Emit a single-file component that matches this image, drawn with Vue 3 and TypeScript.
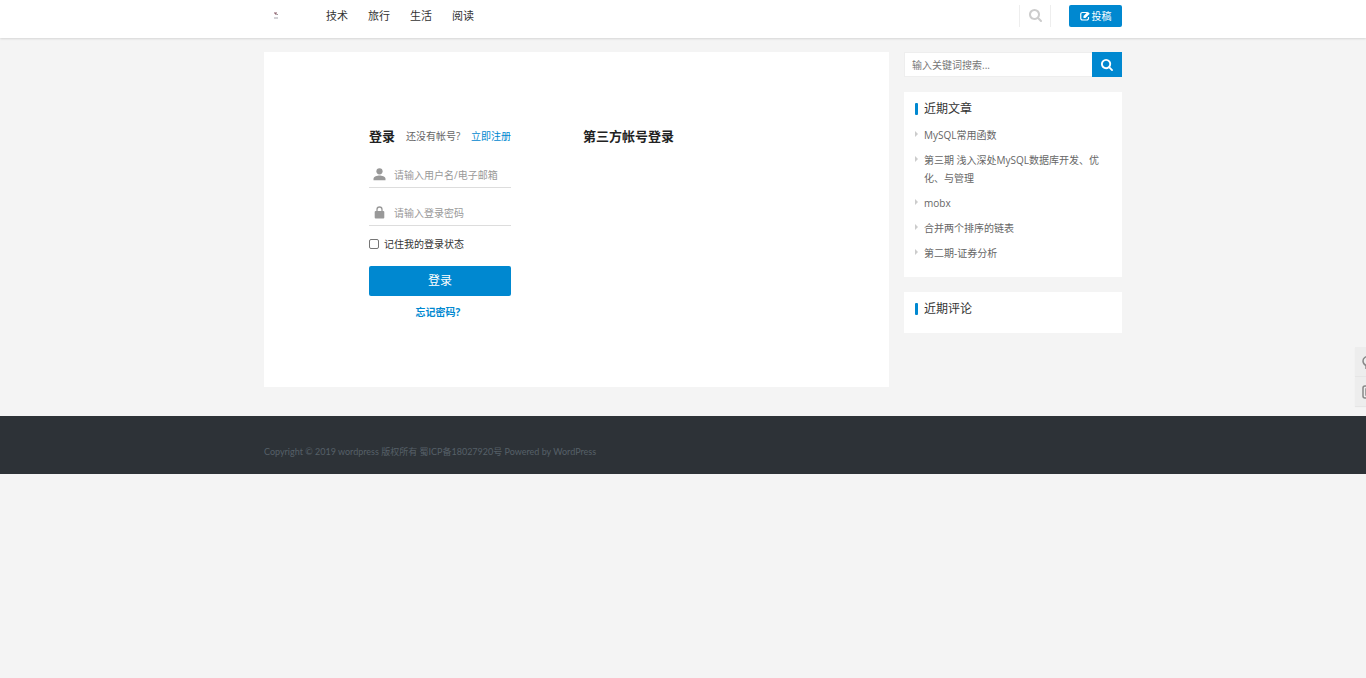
<script setup lang="ts">
import { ref } from 'vue'

const navItems: string[] = ['技术', '旅行', '生活', '阅读']
const recentPosts: string[] = [
  'MySQL常用函数',
  '第三期 浅入深处MySQL数据库开发、优化、与管理',
  'mobx',
  '合并两个排序的链表',
  '第二期-证券分析',
]
const username = ref('')
const password = ref('')
const remember = ref(false)
const keyword = ref('')
const searchPath =
  'M1216 832q0-185-131.500-316.500t-316.500-131.500-316.500 131.500-131.500 316.500 131.500 316.500 316.500 131.500 316.500-131.500 131.500-316.500zm512 832q0 52-38 90t-90 38q-54 0-90-38l-343-342q-179 124-399 124-143 0-273.500-55.500t-225-150-150-225-55.500-273.500 55.500-273.500 150-225 225-150 273.500-55.500 273.500 55.500 225 150 150 225 55.500 273.500q0 220-124 399l343 343q37 37 37 90z'
</script>

<template>
  <div class="page">
    <header class="header">
      <div class="container bar">
        <a class="logo" href="#" aria-label="wordpress">
          <svg width="6" height="10" viewBox="0 0 6 10">
            <path d="M1 1h3v3H2V3H1z" fill="#c3abb2" />
            <path d="M2 2h1v1H2z" fill="#8c6b76" />
            <path d="M4 3h1v1H4z" fill="#999" />
            <path d="M1 6h4v2H1z" fill="#d2d2d6" />
          </svg>
        </a>
        <nav class="nav">
          <a v-for="item in navItems" :key="item" href="#">{{ item }}</a>
        </nav>
        <button class="top-search" type="button" aria-label="搜索">
          <svg width="13" height="13" viewBox="64 128 1664 1664"><path :d="searchPath" fill="currentColor" /></svg>
        </button>
        <a class="publish" href="#">
          <svg width="10" height="10" viewBox="0 0 20 20" fill="none" stroke="currentColor">
            <path d="M14 3H5a3.500 3.500 0 0 0-3.500 3.500v8A3.500 3.500 0 0 0 5 18h8.500a3.500 3.500 0 0 0 3.500-3.500V12" stroke-width="2.400" />
            <path d="M7 14v-4l8.500-8.500 4 4L11 14z" fill="currentColor" stroke="none" />
          </svg>
          投稿
        </a>
      </div>
    </header>

    <div class="container layout">
      <main class="card">
        <form class="login" @submit.prevent>
          <div class="login-head">
            <h2>登录</h2>
            <span>还没有帐号?</span>
            <a href="#">立即注册</a>
          </div>
          <div class="field">
            <label for="username" aria-label="用户名">
              <svg width="13" height="13" viewBox="0 0 13 13" fill="currentColor">
                <circle cx="6.500" cy="3.300" r="3.100" />
                <path d="M0.500 12.300V10.800C0.500 8.700 4.300 7.600 6.500 7.600s6 1.100 6 3.200v1.500z" />
              </svg>
            </label>
            <input id="username" v-model="username" type="text" placeholder="请输入用户名/电子邮箱" />
          </div>
          <div class="field">
            <label for="password" aria-label="密码">
              <svg width="13" height="13" viewBox="0 0 13 13">
                <path d="M4 6V3.500a2.500 2.500 0 0 1 5 0V6" fill="none" stroke="currentColor" stroke-width="1.300" />
                <rect x="1.700" y="5" width="9.600" height="7.400" rx="1" fill="currentColor" />
              </svg>
            </label>
            <input id="password" v-model="password" type="password" placeholder="请输入登录密码" />
          </div>
          <label class="remember">
            <input v-model="remember" type="checkbox" />
            <span>记住我的登录状态</span>
          </label>
          <button class="submit" type="submit">登录</button>
          <a class="forgot" href="#">忘记密码?</a>
        </form>
        <section class="social">
          <h2>第三方帐号登录</h2>
        </section>
      </main>

      <aside class="sidebar">
        <form class="search" role="search" @submit.prevent>
          <input v-model="keyword" type="text" aria-label="搜索" placeholder="输入关键词搜索..." />
          <button type="submit" aria-label="搜索">
            <svg width="12" height="12" viewBox="64 128 1664 1664"><path :d="searchPath" fill="currentColor" /></svg>
          </button>
        </form>
        <section class="widget">
          <h3>近期文章</h3>
          <ul>
            <li v-for="post in recentPosts" :key="post"><a href="#">{{ post }}</a></li>
          </ul>
        </section>
        <section class="widget">
          <h3>近期评论</h3>
        </section>
      </aside>
    </div>

    <footer class="footer">
      <div class="container">
        Copyright © 2019 wordpress 版权所有 <a href="#">蜀ICP备18027920号</a> Powered by WordPress
      </div>
    </footer>

    <div class="float-tools">
      <button type="button" aria-label="客服">
        <svg width="14" height="14" viewBox="0 0 14 14" fill="none" stroke="currentColor" stroke-width="1.500">
          <path d="M4 10.500C2 9.500 1 8 1 6a6 5 0 0 1 12 0c0 3-3 5-6 5l-3 2z" />
        </svg>
      </button>
      <button type="button" aria-label="二维码">
        <svg width="14" height="14" viewBox="0 0 14 14" fill="none" stroke="currentColor" stroke-width="1.500">
          <rect x="1" y="1" width="12" height="12" rx="2" />
          <rect x="4" y="4" width="6" height="6" />
        </svg>
      </button>
    </div>
  </div>
</template>

<style>
body {
  margin: 0;
  background: #f4f4f4;
  overflow-x: hidden;
}
</style>

<style scoped>
.page {
  --blue: #0088d0;
  font-family: 'Open Sans', 'Noto Sans CJK SC', sans-serif;
  font-size: 10px;
  line-height: 18px;
  color: #666;
}
.page * {
  box-sizing: border-box;
}
a {
  color: inherit;
  text-decoration: none;
}
button,
input {
  font: inherit;
  color: inherit;
  border: 0;
  border-radius: 0;
  padding: 0;
  margin: 0;
  background: none;
}
svg {
  display: block;
}
h2,
h3 {
  margin: 0;
}
.container {
  max-width: 858px;
  margin: 0 auto;
}
.header,
.layout,
.footer {
  padding-left: 20px;
}
.header {
  background: #fff;
  height: 38px;
  box-shadow: 0 1px 2px rgba(0, 0, 0, 0.12);
}
.bar {
  display: flex;
  align-items: center;
  height: 31px;
}
.logo {
  width: 62px;
  padding-left: 9px;
}
.nav {
  display: flex;
  gap: 20px;
  flex: 1;
  font-size: 11px;
  color: #333;
}
.top-search {
  width: 32px;
  height: 22px;
  margin-right: 18px;
  border: solid #eee;
  border-width: 0 1px;
  color: #ccc;
  display: flex;
  align-items: center;
  justify-content: center;
}
.publish {
  display: flex;
  align-items: center;
  justify-content: center;
  gap: 2px;
  width: 53px;
  height: 22px;
  background: var(--blue);
  color: #fff;
  border-radius: 2px;
}
.layout {
  max-width: 878px;
  padding-top: 14px;
  display: grid;
  grid-template-columns: minmax(0, 1fr) 218px;
  gap: 15px;
  align-items: start;
}
.card {
  background: #fff;
  padding: 74px 105px 66px;
  display: grid;
  grid-template-columns: 142px 1fr;
  gap: 72px;
}
h2 {
  font-size: 13px;
  line-height: 20px;
  font-weight: 700;
  color: #222;
}
.login {
  display: flex;
  flex-direction: column;
}
.login-head {
  display: flex;
  align-items: center;
  white-space: nowrap;
  height: 20px;
}
.login-head span {
  margin-left: 11px;
}
.login-head a {
  margin-left: auto;
  color: var(--blue);
}
.field {
  display: flex;
  align-items: center;
  height: 26px;
  margin-top: 16px;
  border-bottom: 1px solid #ddd;
  color: #999;
}
.field + .field {
  margin-top: 12px;
}
.field label {
  padding: 0 8px 0 4px;
}
.field input {
  flex: 1;
  min-width: 0;
  outline: none;
}
input::placeholder {
  color: #999;
  opacity: 1;
}
.remember {
  display: flex;
  align-items: center;
  gap: 5px;
  margin-top: 9px;
  color: #333;
}
.remember input {
  appearance: none;
  width: 10px;
  height: 10px;
  border: 1px solid #767676;
  border-radius: 2px;
}
.remember input:checked {
  background: var(--blue);
}
.submit {
  height: 30px;
  margin-top: 13px;
  background: var(--blue);
  color: #fff;
  font-size: 12px;
  border-radius: 2px;
}
.forgot {
  margin-top: 7px;
  padding-right: 4px;
  align-self: center;
  color: var(--blue);
  font-weight: 700;
}
.sidebar {
  display: grid;
  gap: 15px;
}
.search {
  display: flex;
  height: 25px;
}
.search input {
  flex: 1;
  min-width: 0;
  padding: 0 7px;
  background: #fff;
  border: 1px solid #eee;
  border-right: 0;
}
.search input::placeholder {
  color: #777;
}
.search button {
  width: 30px;
  background: var(--blue);
  color: #fff;
  display: flex;
  align-items: center;
  justify-content: center;
}
.widget {
  background: #fff;
  padding: 8px 11px 15px;
}
h3 {
  display: flex;
  align-items: center;
  gap: 6px;
  font-size: 12px;
  line-height: 18px;
  font-weight: 400;
  color: #333;
}
h3::before {
  content: '';
  width: 3px;
  height: 12px;
  border-radius: 1px;
  background: var(--blue);
}
ul {
  list-style: none;
  margin: 8px 0 0;
  padding: 0;
  display: grid;
  gap: 7px;
}
li {
  display: flex;
  gap: 6px;
}
li::before {
  content: '';
  flex: none;
  margin-top: 5px;
  width: 0;
  height: 0;
  border: solid transparent;
  border-width: 3px 0 3px 3px;
  border-left-color: #ccc;
}
.footer {
  margin-top: 29px;
  padding-top: 27px;
  padding-bottom: 13px;
  background: #2d3237;
  font-family: Lato, 'Noto Sans CJK SC', sans-serif;
  font-size: 9px;
  color: #566068;
}
.float-tools {
  position: fixed;
  right: -18px;
  top: 347px;
  display: grid;
  gap: 1px;
}
.float-tools button {
  width: 29px;
  height: 29px;
  padding-left: 7px;
  background: #ededed;
  box-shadow: 0 1px 1px rgba(0, 0, 0, 0.06);
  color: #888;
}
</style>
